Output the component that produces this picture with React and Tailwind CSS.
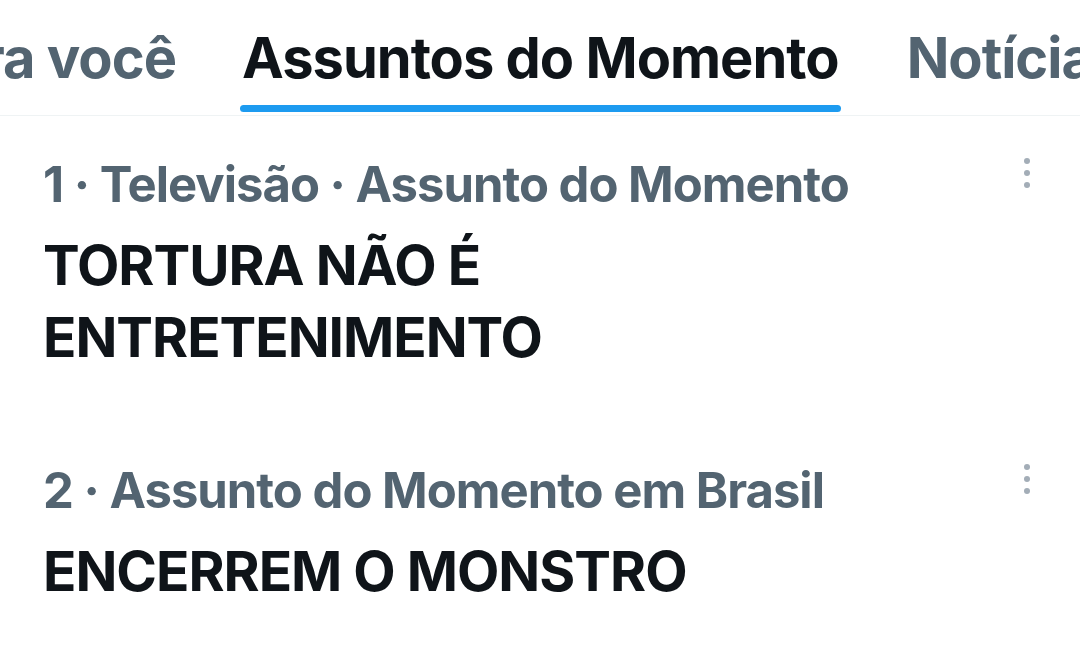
export default function App() {
  const font = { fontFamily: 'Inter, "Noto Sans", sans-serif' };
  const trends = [
    { sub: "1 · Televisão · Assunto do Momento", title: ["TORTURA NÃO É", "ENTRETENIMENTO"] },
    { sub: "2 · Assunto do Momento em Brasil", title: ["ENCERREM O MONSTRO"] },
  ];
  return (
    <div className="w-[1080px] h-[648px] bg-white overflow-hidden" style={font}>
      <div className="box-border h-[116px] border-b border-[#eff3f4] flex items-start">
        <div className="w-[176px] shrink-0 overflow-hidden flex justify-end pt-[30px]">
          <span className="whitespace-nowrap text-[56px] leading-[56px] font-bold text-[#536471] tracking-[-1px]">Para você</span>
        </div>
        <div className="ml-[66px] flex flex-col items-stretch pt-[30px] shrink-0">
          <span className="whitespace-nowrap text-[56px] leading-[56px] font-bold text-[#0f1419] tracking-[-1px]">Assuntos do Momento</span>
          <div className="mt-[19px] -mx-[2px] h-[7px] rounded-full bg-[#1d9bf0]" />
        </div>
        <div className="ml-[68px] pt-[30px] shrink-0">
          <span className="whitespace-nowrap text-[56px] leading-[56px] font-bold text-[#536471] tracking-[-1px]">Notícias</span>
        </div>
      </div>
      {trends.map((t, i) => (
        <div key={i} className="flex items-start pl-[43px] pr-[50px] pt-[44px] pb-[49px]">
          <div className="flex-1 flex flex-col">
            <div className="text-[49px] leading-[49px] font-bold text-[#536471] whitespace-nowrap tracking-[-1px]">{t.sub}</div>
            <div className="mt-[20px] text-[55px] leading-[72px] font-bold text-[#0f1419] tracking-[-1px]">
              {t.title.map((l, j) => (
                <div key={j} className="whitespace-nowrap">{l}</div>
              ))}
            </div>
          </div>
          <svg width="6" height="30" viewBox="0 0 6 30" className="shrink-0 -mt-[2px]">
            <circle cx="3" cy="3" r="3" fill="#a3adb7" />
            <circle cx="3" cy="15" r="3" fill="#a3adb7" />
            <circle cx="3" cy="27" r="3" fill="#a3adb7" />
          </svg>
        </div>
      ))}
    </div>
  );
}
